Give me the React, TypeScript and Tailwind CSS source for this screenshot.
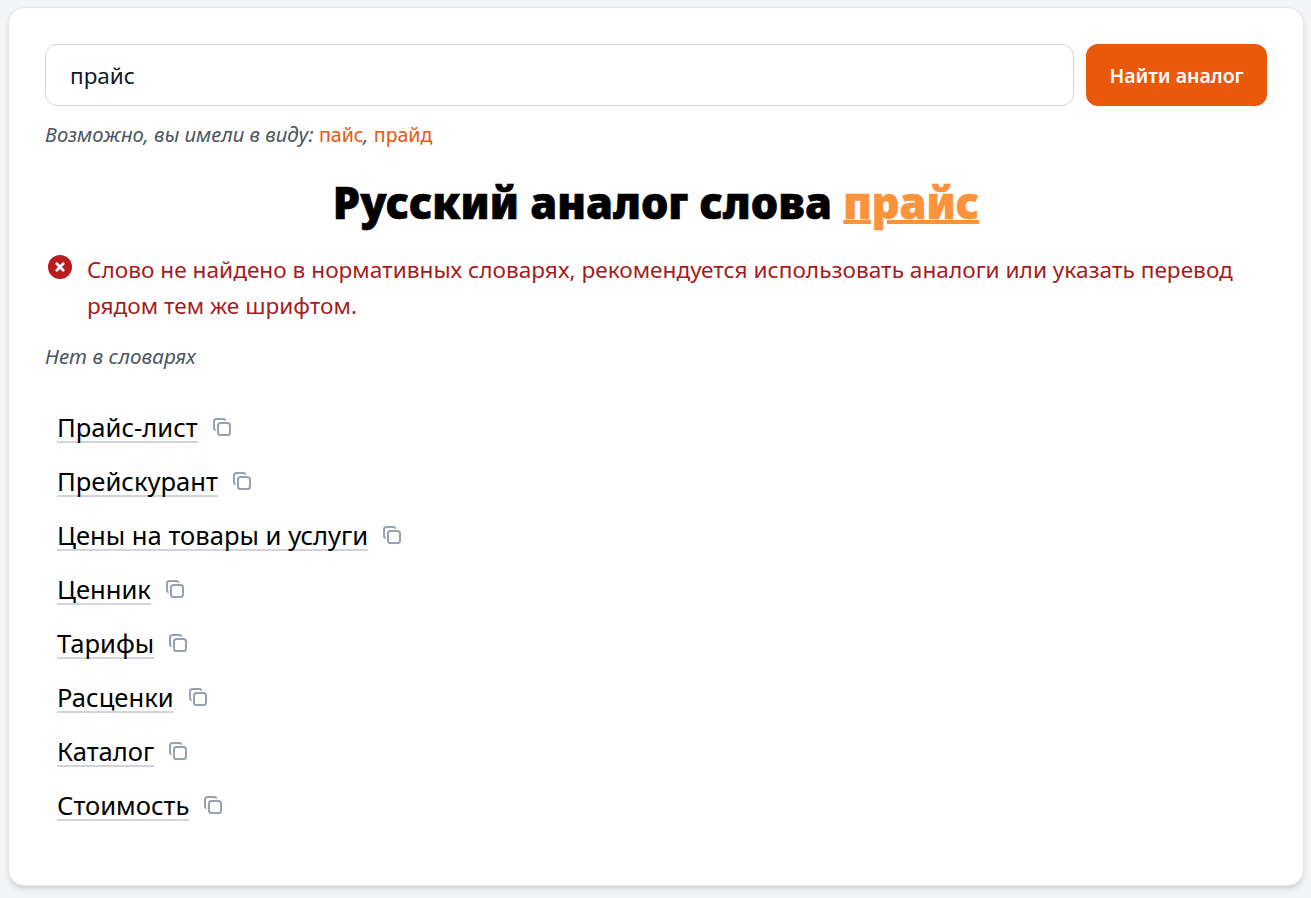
const FONT = "font-['Noto_Sans','Open_Sans',sans-serif]";

const ANALOGS = [
  "Прайс-лист",
  "Прейскурант",
  "Цены на товары и услуги",
  "Ценник",
  "Тарифы",
  "Расценки",
  "Каталог",
  "Стоимость",
];

function CopyIcon() {
  return (
    <svg viewBox="0 0 18 18" fill="none" className="h-[18px] w-[18px] shrink-0 text-gray-400" stroke="currentColor" strokeWidth="2">
      <rect x="5" y="5" width="12" height="12" rx="2.6" />
      <path d="M2.6 12.6C1.6 12.2 1 11.4 1 10.2V3.6C1 2 2 1 3.6 1H10.2C11.4 1 12.2 1.6 12.6 2.6" />
    </svg>
  );
}

function ErrorIcon() {
  return (
    <svg viewBox="0 0 24 24" className="mt-[3px] h-6 w-6 shrink-0">
      <circle cx="12" cy="12" r="12" fill="#b91c1c" />
      <path d="M8.8 8.8L15.2 15.2M15.2 8.8L8.8 15.2" stroke="#fff" strokeWidth="2.8" strokeLinecap="round" />
    </svg>
  );
}

export default function App() {
  return (
    <div className={`${FONT} h-[898px] overflow-hidden bg-[#f3f4f6] pt-[7px] pr-[7px] pl-2 text-black`}>
      <main className="h-[879px] rounded-2xl border border-[#e5e7eb] bg-white px-9 pt-9 shadow-md">
        <form className="flex gap-3">
          <input
            readOnly
            value="прайс"
            className="h-[62px] min-w-0 flex-1 rounded-xl border border-[#d1d5db] bg-white px-6 pt-px text-[22.5px] text-[#111827] outline-none"
          />
          <button type="button" className="h-[62px] w-[181px] rounded-xl bg-[#ea580c] pt-px text-[19.5px] font-semibold text-white">
            Найти аналог
          </button>
        </form>
        <p className="mt-[13px] text-[20.3px] leading-[30px] text-[#4b5563] italic">
          Возможно, вы имели в виду: <a className="text-[19.5px] text-[#ea580c] not-italic">пайс</a>,{" "}
          <a className="text-[19.5px] text-[#ea580c] not-italic">прайд</a>
        </p>
        <h1 className="mt-[25px] text-center text-[43.4px] leading-[56px] font-black [-webkit-text-stroke:0.6px_currentColor]">
          Русский аналог слова <a className="text-[#fb923c] underline decoration-[4px] underline-offset-[1px]">прайс</a>
        </h1>
        <div className="mt-[21px] flex gap-[15px] pl-[3px] text-[22.65px] leading-9 text-[#a51c1c]">
          <ErrorIcon />
          <p>Слово не найдено в нормативных словарях, рекомендуется использовать аналоги или указать перевод рядом тем же шрифтом.</p>
        </div>
        <p className="mt-[18px] text-[20.7px] leading-7 text-[#4b5563] italic">Нет в словарях</p>
        <ul className="mt-[41px] flex flex-col gap-[18px] pl-3">
          {ANALOGS.map((word) => (
            <li key={word} className="flex h-9 items-center gap-[15px]">
              <span className="border-b-2 border-[#d1d5db] text-[25.6px] leading-[26px] text-black">{word}</span>
              <span className="-mt-[4px]"><CopyIcon /></span>
            </li>
          ))}
        </ul>
      </main>
    </div>
  );
}
